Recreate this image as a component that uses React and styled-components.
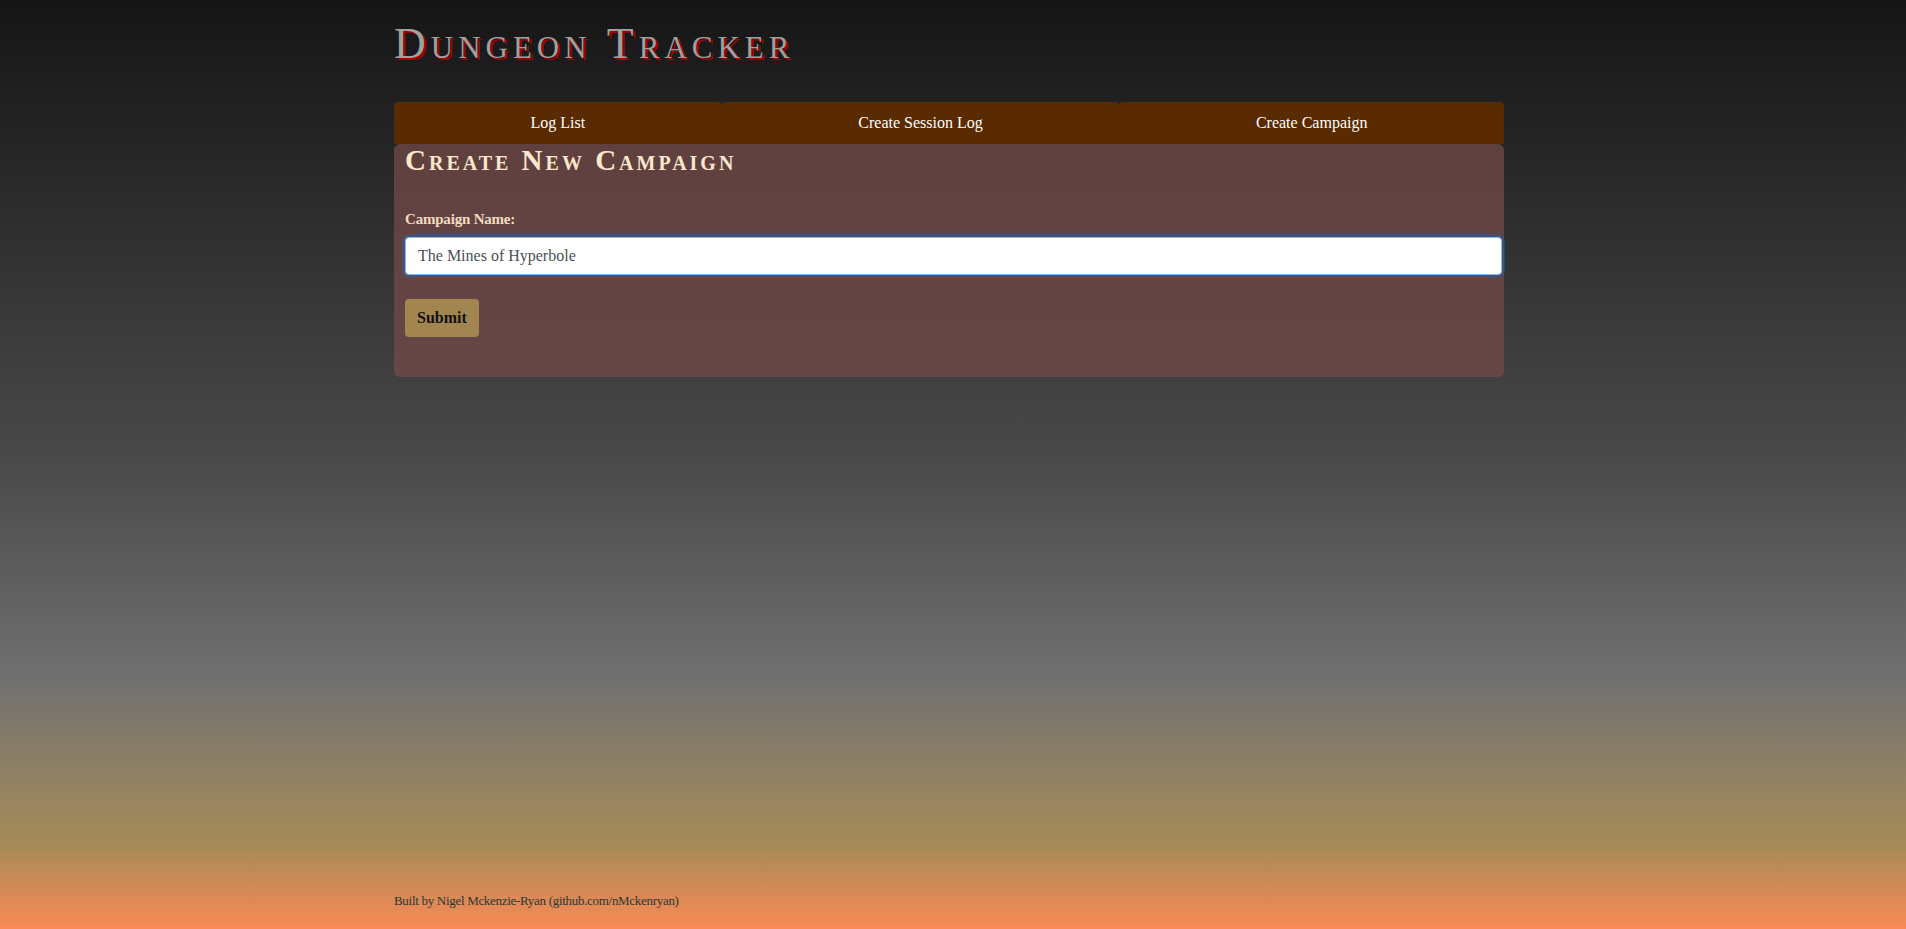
import React, { useEffect, useRef } from "react";
import styled, { createGlobalStyle } from "styled-components";

const GlobalStyle = createGlobalStyle`
  html, body {
    margin: 0;
    padding: 0;
  }
  body {
    font-family: "Liberation Serif", "DejaVu Serif", serif;
  }
  * { box-sizing: border-box; }
`;

const Page = styled.div`
  min-height: 100vh;
  display: flex;
  flex-direction: column;
  background: linear-gradient(
    180deg,
    #151515 0%,
    #4a4a4a 50%,
    #707070 73%,
    #8c7f66 82%,
    #a68b57 91%,
    #fa8a55 100%
  );
`;

const Container = styled.div`
  width: 1110px;
  margin-left: calc(50% - 559px);
  display: flex;
  flex-direction: column;
`;

const FooterArea = styled(Container)`
  flex: 1;
`;

const Title = styled.h1`
  margin: 0;
  padding-top: 19px;
  font-size: 44px;
  line-height: 50px;
  font-weight: 400;
  font-variant: small-caps;
  letter-spacing: 5px;
  color: #a0a0a0;
  text-shadow: 2px 2px 0 #a30000;
`;

const Nav = styled.nav`
  margin-top: 33px;
  display: flex;
  height: 42px;
`;

const Tab = styled.a`
  flex: 1 1 auto;
  display: flex;
  align-items: center;
  justify-content: center;
  background: #5a2a00;
  color: #ffffff;
  font-size: 16px;
  text-decoration: none;
  border-radius: 4px 4px 0 0;
  cursor: pointer;
`;

const Panel = styled.section`
  background: rgba(118, 74, 72, 0.74);
  border-radius: 6px;
  padding: 2px 2px 40px 11px;
`;

const PanelTitle = styled.h2`
  margin: 0;
  font-size: 29px;
  line-height: 28px;
  font-weight: 700;
  font-variant: small-caps;
  letter-spacing: 3px;
  color: #fbe8cc;
`;

const Form = styled.form`
  margin-top: 34px;
  display: flex;
  flex-direction: column;
  align-items: flex-start;
`;

const Label = styled.label`
  font-size: 15px;
  line-height: 22px;
  font-weight: 700;
  color: #f3dcc0;
  letter-spacing: -0.2px;
  margin-bottom: 7px;
`;

const Input = styled.input`
  width: 100%;
  height: 38px;
  padding: 0 12px;
  font-family: "Liberation Serif", "DejaVu Serif", serif;
  font-size: 16px;
  color: #495057;
  background: #ffffff;
  border: 1px solid #80bdff;
  border-radius: 4px;
  outline: none;
  box-shadow: 0 0 0 3px rgba(0, 123, 255, 0.25);
`;

const SubmitButton = styled.button`
  margin-top: 24px;
  height: 38px;
  padding: 0 12px;
  font-family: "Liberation Serif", "DejaVu Serif", serif;
  font-size: 16px;
  font-weight: 700;
  color: #111111;
  background: #a3864f;
  border: none;
  border-radius: 4px;
  cursor: pointer;
`;

const Footer = styled.footer`
  margin-top: auto;
  padding-bottom: 18px;
  font-size: 13px;
  line-height: 21px;
  letter-spacing: -0.3px;
  color: #2a3636;
`;

export default function App() {
  const inputRef = useRef(null);
  useEffect(() => {
    const el = inputRef.current;
    if (el) {
      el.focus();
      const n = el.value.length;
      el.setSelectionRange(n, n);
    }
  }, []);

  return (
    <>
      <GlobalStyle />
      <Page>
        <Container>
          <Title>Dungeon Tracker</Title>
          <Nav>
            <Tab>Log List</Tab>
            <Tab>Create Session Log</Tab>
            <Tab>Create Campaign</Tab>
          </Nav>
          <Panel>
            <PanelTitle>Create New Campaign</PanelTitle>
            <Form onSubmit={(e) => e.preventDefault()}>
              <Label htmlFor="campaign-name">Campaign Name:</Label>
              <Input
                id="campaign-name"
                ref={inputRef}
                defaultValue="The Mines of Hyperbole"
              />
              <SubmitButton type="submit">Submit</SubmitButton>
            </Form>
          </Panel>
        </Container>
        <FooterArea>
          <Footer>Built by Nigel Mckenzie-Ryan (github.com/nMckenryan)</Footer>
        </FooterArea>
      </Page>
    </>
  );
}
